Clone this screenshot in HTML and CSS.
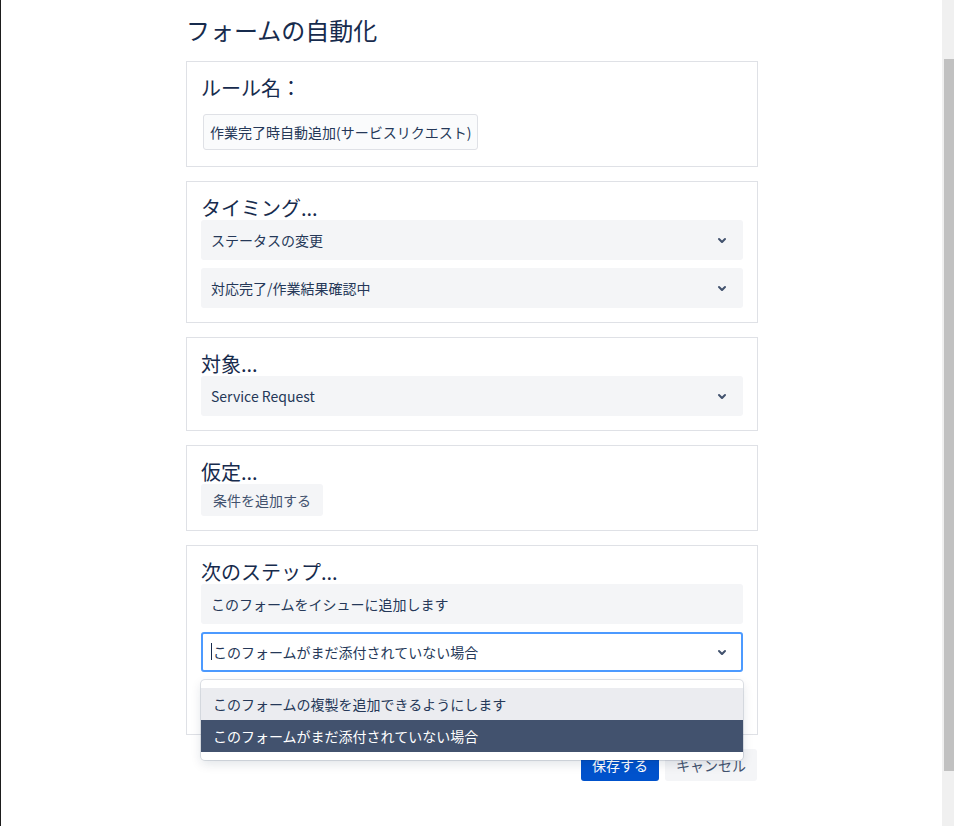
FILE: index.html
```html
<!DOCTYPE html>
<html lang="ja">
<head>
<meta charset="utf-8">
<title>フォームの自動化</title>
<link rel="stylesheet" href="styles.css">
</head>
<body>
<div class="viewport">
  <main class="main">
    <div class="container">
      <h1 class="page-title">フォームの自動化</h1>
      <div class="cards">
        <section class="card">
          <h2 class="card-title spaced">ルール名：</h2>
          <div class="text-field">作業完了時自動追加(サービスリクエスト)</div>
        </section>

        <section class="card">
          <h2 class="card-title">タイミング...</h2>
          <div class="field-stack">
            <div class="select">
              <span class="select-value">ステータスの変更</span>
              <svg class="chevron" viewBox="0 0 24 24"><path d="M8.292 10.293a1.009 1.009 0 0 0 0 1.419l2.939 2.965c.218.215.5.322.779.322s.556-.107.769-.322l2.93-2.955a1.01 1.01 0 0 0 0-1.419.987.987 0 0 0-1.406 0l-2.298 2.317-2.307-2.327a.99.99 0 0 0-1.406 0z" fill="currentColor"/></svg>
            </div>
            <div class="select">
              <span class="select-value">対応完了/作業結果確認中</span>
              <svg class="chevron" viewBox="0 0 24 24"><path d="M8.292 10.293a1.009 1.009 0 0 0 0 1.419l2.939 2.965c.218.215.5.322.779.322s.556-.107.769-.322l2.93-2.955a1.01 1.01 0 0 0 0-1.419.987.987 0 0 0-1.406 0l-2.298 2.317-2.307-2.327a.99.99 0 0 0-1.406 0z" fill="currentColor"/></svg>
            </div>
          </div>
        </section>

        <section class="card">
          <h2 class="card-title">対象...</h2>
          <div class="field-stack">
            <div class="select">
              <span class="select-value">Service Request</span>
              <svg class="chevron" viewBox="0 0 24 24"><path d="M8.292 10.293a1.009 1.009 0 0 0 0 1.419l2.939 2.965c.218.215.5.322.779.322s.556-.107.769-.322l2.93-2.955a1.01 1.01 0 0 0 0-1.419.987.987 0 0 0-1.406 0l-2.298 2.317-2.307-2.327a.99.99 0 0 0-1.406 0z" fill="currentColor"/></svg>
            </div>
          </div>
        </section>

        <section class="card card-left">
          <h2 class="card-title">仮定...</h2>
          <button class="btn btn-subtle btn-wide" type="button">条件を追加する</button>
        </section>

        <section class="card">
          <h2 class="card-title">次のステップ...</h2>
          <div class="field-stack">
            <div class="select">
              <span class="select-value">このフォームをイシューに追加します</span>
            </div>
            <div class="select-wrap">
              <div class="select is-focused">
                <span class="caret"></span>
                <span class="select-value">このフォームがまだ添付されていない場合</span>
                <svg class="chevron" viewBox="0 0 24 24"><path d="M8.292 10.293a1.009 1.009 0 0 0 0 1.419l2.939 2.965c.218.215.5.322.779.322s.556-.107.769-.322l2.93-2.955a1.01 1.01 0 0 0 0-1.419.987.987 0 0 0-1.406 0l-2.298 2.317-2.307-2.327a.99.99 0 0 0-1.406 0z" fill="currentColor"/></svg>
              </div>
              <div class="menu">
                <div class="option is-hover">このフォームの複製を追加できるようにします</div>
                <div class="option is-selected">このフォームがまだ添付されていない場合</div>
              </div>
            </div>
            <div class="select"></div>
          </div>
        </section>

        <div class="actions">
          <button class="btn btn-primary" type="button">保存する</button>
          <button class="btn btn-subtle" type="button">キャンセル</button>
        </div>
      </div>
    </div>
  </main>
  <div class="scrollbar"><div class="scroll-thumb"></div></div>
</div>
</body>
</html>
```

FILE: styles.css
```css
html, body {
  margin: 0;
  padding: 0;
  height: 100%;
}

body {
  font-family: "Noto Sans CJK JP", "Noto Sans", sans-serif;
  color: #172b4d;
  background: #ffffff;
  overflow: hidden;
}

.viewport {
  display: flex;
  height: 826px;
}

.main {
  flex: 1;
  min-width: 0;
  border-left: 1px solid #1d1d1d;
}

.container {
  width: 572px;
  margin-left: 185px;
}

.page-title {
  margin: 0 0 17px 0;
  padding-top: 16px;
  font-size: 24px;
  line-height: 28px;
  font-weight: 400;
  color: #172b4d;
}

.cards {
  display: flex;
  flex-direction: column;
  gap: 14px;
}

.card {
  border: 1px solid #dfe1e6;
  padding: 14px;
  display: flex;
  flex-direction: column;
}

.card-left {
  align-items: flex-start;
}

.card-title {
  margin: 0;
  font-size: 20px;
  line-height: 24px;
  font-weight: 400;
  color: #172b4d;
}

.card-title.spaced {
  margin-bottom: 14px;
}

.text-field {
  align-self: flex-start;
  display: flex;
  align-items: center;
  box-sizing: border-box;
  height: 36px;
  margin: 0 0 2px 2px;
  padding: 0 6px 1px 6px;
  border: 1px solid #dfe1e6;
  border-radius: 3px;
  background: #fafbfc;
  font-size: 14px;
  color: #253858;
}

.field-stack {
  display: flex;
  flex-direction: column;
  gap: 8px;
}

.select {
  display: flex;
  align-items: center;
  box-sizing: border-box;
  height: 40px;
  padding: 0 7px 1px 8px;
  border: 2px solid #f4f5f7;
  border-radius: 3px;
  background: #f4f5f7;
  font-size: 14px;
  color: #253858;
}

.select-value {
  flex: 1;
  white-space: nowrap;
}

.select.is-focused {
  background: #ffffff;
  border-color: #4c9aff;
}

.caret {
  width: 1px;
  height: 17px;
  background: #172b4d;
  margin-right: 1px;
}

.chevron {
  width: 24px;
  height: 24px;
  color: #42526e;
  flex: none;
  margin-top: 1px;
}

.select-wrap {
  position: relative;
}

.menu {
  position: absolute;
  top: calc(100% + 8px);
  left: 0;
  right: 0;
  z-index: 10;
  padding: 8px 0;
  background: #ffffff;
  border-radius: 4px;
  box-shadow: 0 0 0 1px rgba(9, 30, 66, 0.12), 0 4px 11px rgba(9, 30, 66, 0.12);
}

.option {
  display: flex;
  align-items: center;
  height: 32px;
  padding: 0 12px 1px 12px;
  box-sizing: border-box;
  font-size: 14px;
  color: #253858;
}

.option.is-hover {
  background: #ebecf0;
}

.option.is-selected {
  background: #42526e;
  color: #ffffff;
}

.actions {
  display: flex;
  justify-content: flex-end;
  gap: 6px;
  padding-right: 1px;
}

.btn {
  height: 32px;
  padding: 0 11px;
  border: none;
  border-radius: 3px;
  font-family: inherit;
  font-size: 14px;
  line-height: 31px;
  cursor: pointer;
}

.btn-wide {
  padding: 0 12px;
}

.btn-primary {
  background: #0052cc;
  color: #ffffff;
}

.btn-subtle {
  background: #f4f5f7;
  color: #42526e;
}

.scrollbar {
  width: 12px;
  box-sizing: border-box;
  padding: 59px 0 0 2px;
  background: #f0f0f0;
}

.scroll-thumb {
  height: 712px;
  background: #c1c1c1;
}
```
